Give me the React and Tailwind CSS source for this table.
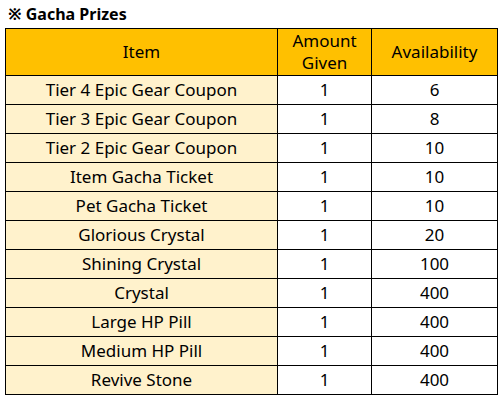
const prizes = [
  ["Tier 4 Epic Gear Coupon", "1", "6"],
  ["Tier 3 Epic Gear Coupon", "1", "8"],
  ["Tier 2 Epic Gear Coupon", "1", "10"],
  ["Item Gacha Ticket", "1", "10"],
  ["Pet Gacha Ticket", "1", "10"],
  ["Glorious Crystal", "1", "20"],
  ["Shining Crystal", "1", "100"],
  ["Crystal", "1", "400"],
  ["Large HP Pill", "1", "400"],
  ["Medium HP Pill", "1", "400"],
  ["Revive Stone", "1", "400"],
];

export default function App() {
  return (
    <div className="w-[503px] h-[400px] bg-white text-black font-['Noto_Sans',sans-serif] text-[17px]">
      <div className="h-[28px] pl-[8px] pt-[3px] text-[16px] font-bold leading-[22px]">※ Gacha Prizes</div>
      <table className="ml-[5px] w-[492px] border-collapse table-fixed text-center">
        <colgroup>
          <col className="w-[272px]" />
          <col className="w-[94px]" />
          <col className="w-[126px]" />
        </colgroup>
        <thead>
          <tr className="bg-[#ffc000] h-[47px]">
            <th className="border border-black font-normal p-0">Item</th>
            <th className="border border-black font-normal p-0 leading-[22px]">
              <div>Amount</div>
              <div>Given</div>
            </th>
            <th className="border border-black font-normal p-0">Availability</th>
          </tr>
        </thead>
        <tbody>
          {prizes.map(([name, amount, avail]) => (
            <tr key={name} className="h-[29px]">
              <td className="border border-black bg-[#fff2cc] p-0 leading-[28px]">{name}</td>
              <td className="border border-black p-0 leading-[28px]">{amount}</td>
              <td className="border border-black p-0 leading-[28px]">{avail}</td>
            </tr>
          ))}
        </tbody>
      </table>
    </div>
  );
}
